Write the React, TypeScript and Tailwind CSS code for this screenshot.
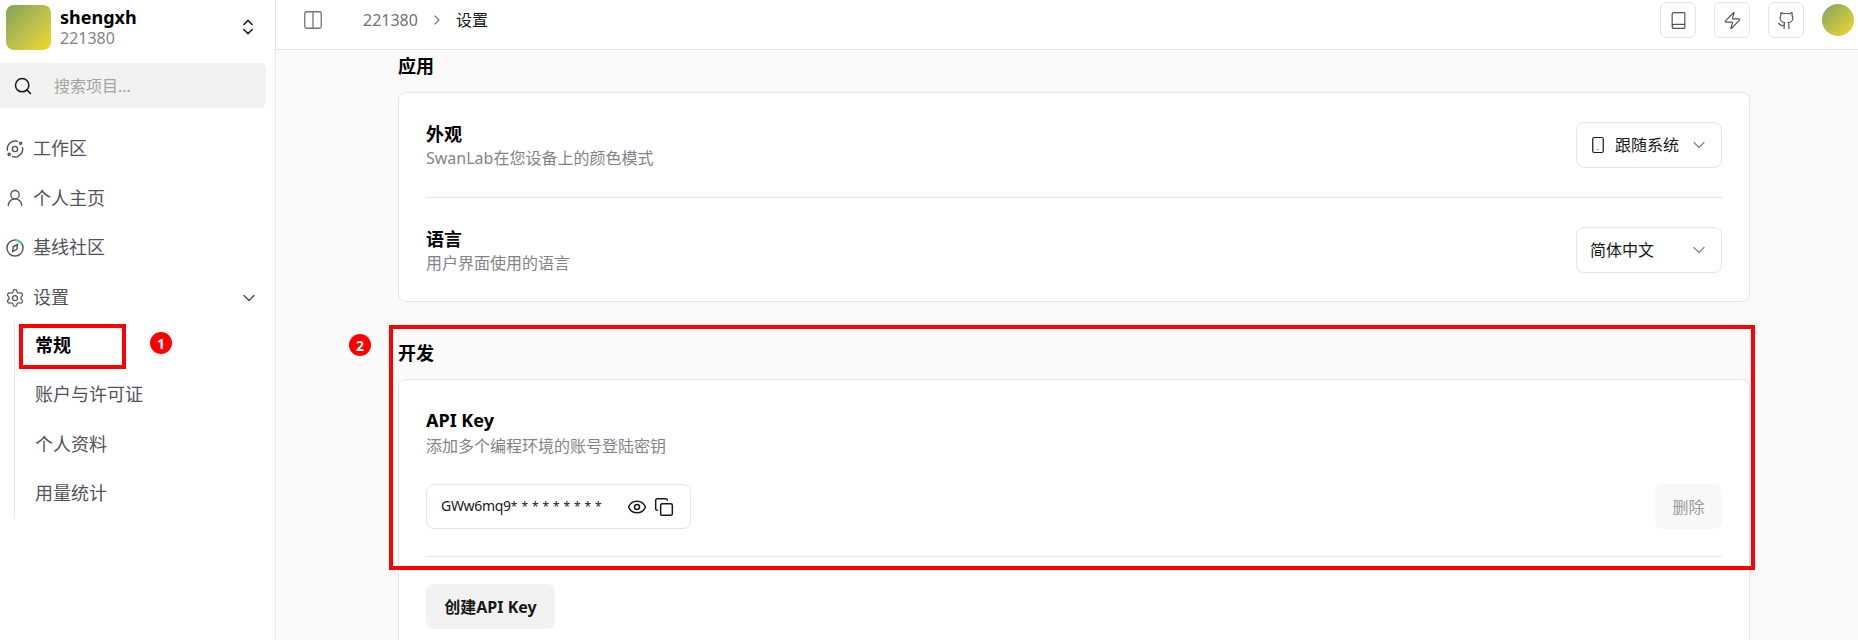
import { Book, ChevronDown, ChevronRight, ChevronsUpDown, Columns2, Copy, Eye, Github, Search, Settings, Smartphone, UserRound, Zap } from "lucide-react";

const font = { fontFamily: '"Noto Sans", "Noto Sans CJK SC", sans-serif' };

const OrbitIcon = () => (
  <svg width="20" height="20" viewBox="0 0 20 20" fill="none" stroke="#52525b" strokeWidth="1.4" strokeLinecap="round">
    <circle cx="10" cy="10" r="2.6" />
    <path d="M12.5 2.4A7.8 7.8 0 0 0 3 6.6a7.8 7.8 0 0 0-.6 4.6" />
    <path d="M7.5 17.6A7.8 7.8 0 0 0 17 13.4a7.8 7.8 0 0 0 .6-4.6" />
    <circle cx="15.6" cy="4.2" r="1.1" />
    <circle cx="4.2" cy="15.4" r="1.1" />
  </svg>
);

const CompassIcon = () => (
  <svg width="20" height="20" viewBox="0 0 20 20" fill="none" strokeWidth="1.4" strokeLinecap="round">
    <circle cx="10" cy="10" r="8" stroke="#52525b" />
    <path d="M10 2A8 8 0 0 1 16.2 5" stroke="#2dd4a7" />
    <path d="M12.4 6.6 11.8 11.4 7.6 13.6 8.2 8.8Z" stroke="#52525b" />
  </svg>
);

const navItems = [
  { label: "工作区", icon: <OrbitIcon /> },
  { label: "个人主页", icon: <UserRound size={20} strokeWidth={1.6} className="text-[#52525b]" /> },
  { label: "基线社区", icon: <CompassIcon /> },
];

const SelectBox = ({ label, withIcon }: { label: string; withIcon?: boolean }) => (
  <div className="flex h-[46px] w-[146px] items-center rounded-lg border border-[#e5e5e5] bg-white pl-[13px] pr-[12px] text-[16px] text-[#18181b]">
    {withIcon && <Smartphone size={18} strokeWidth={1.6} className="mr-[8px] -ml-[1px] shrink-0" />}
    <span className="flex-1">{label}</span>
    <ChevronDown size={20} strokeWidth={1.6} className="text-[#8a8a8a]" />
  </div>
);

const Row = ({ title, desc, children }: { title: string; desc: string; children: React.ReactNode }) => (
  <div className="flex items-center justify-between">
    <div>
      <div className="text-[18px] leading-[26px] font-bold text-black">{title}</div>
      <div className="text-[16px] leading-[22px] text-[#83838a]">{desc}</div>
    </div>
    {children}
  </div>
);

const HeaderButton = ({ children }: { children: React.ReactNode }) => (
  <div className="flex h-[36px] w-[36px] items-center justify-center rounded-md border border-[#e5e5e5] text-[#52525b]">{children}</div>
);

export default function App() {
  return (
    <div style={font} className="relative flex h-[640px] w-[1858px] overflow-hidden bg-white">
      <aside className="w-[276px] shrink-0 border-r border-[#e5e5e5] pr-[9px]">
        <div className="flex h-[63px] items-start pl-[6px] pt-[5px]">
          <div className="h-[45px] w-[45px] rounded-lg bg-gradient-to-br from-[#7ea35c] to-[#f5d91c]" />
          <div className="ml-[9px] flex-1">
            <div className="text-[18px] leading-[24px] font-bold text-black">shengxh</div>
            <div className="text-[16px] leading-[18px] text-[#83838a]">221380</div>
          </div>
          <ChevronsUpDown size={20} strokeWidth={2} className="mr-[8px] mt-[12px] text-[#27272a]" />
        </div>
        <div className="flex h-[45px] items-center rounded-r-md bg-[#f2f2f2] pl-[13px]">
          <Search size={20} strokeWidth={1.8} className="text-[#18181b]" />
          <span className="ml-[21px] text-[16px] text-[#a3a3a3]">搜索项目...</span>
        </div>
        <nav className="mt-[16px]">
          {navItems.map((item) => (
            <div key={item.label} className="flex h-[49.6px] items-center gap-[8px] pl-[5px] text-[18px] text-[#52525b]">
              {item.icon}
              <span>{item.label}</span>
            </div>
          ))}
          <div className="flex h-[49.6px] items-center gap-[8px] pl-[5px] pr-[7px] text-[18px] text-[#52525b]">
            <Settings size={20} strokeWidth={1.5} />
            <span className="flex-1">设置</span>
            <ChevronDown size={20} strokeWidth={1.8} />
          </div>
          <div className="ml-[14px] border-l border-[#e5e5e5] pl-[20px] text-[18px] text-[#52525b]">
            <div className="flex h-[47px] items-center font-bold text-black">常规</div>
            <div className="flex h-[50px] items-center">账户与许可证</div>
            <div className="flex h-[49.5px] items-center">个人资料</div>
            <div className="flex h-[49.5px] items-center">用量统计</div>
          </div>
        </nav>
      </aside>

      <div className="flex min-w-0 flex-1 flex-col bg-[#fafafa]">
        <header className="flex h-[50px] shrink-0 items-start border-b border-[#e5e5e5] bg-white pt-[2px] pl-[26px] pr-[4px]">
          <div className="flex h-[36px] flex-1 items-center">
            <Columns2 size={22} strokeWidth={1.4} className="text-[#71717a]" />
            <span className="ml-[39px] text-[16px] text-[#71717a]">221380</span>
            <ChevronRight size={16} strokeWidth={1.6} className="ml-[11px] text-[#71717a]" />
            <span className="ml-[11px] text-[16px] text-[#18181b]">设置</span>
          </div>
          <div className="flex items-center gap-[18px]">
            <HeaderButton><Book size={19} strokeWidth={1.5} /></HeaderButton>
            <HeaderButton><Zap size={19} strokeWidth={1.5} /></HeaderButton>
            <HeaderButton><Github size={19} strokeWidth={1.5} /></HeaderButton>
            <div className="h-[32px] w-[32px] rounded-full bg-gradient-to-br from-[#7ea35c] to-[#f5d91c]" />
          </div>
        </header>

        <main className="min-h-0 flex-1 overflow-hidden pl-[122px]">
          <div className="w-[1352px]">
            <h2 className="mt-[3px] text-[18px] leading-[26px] font-bold text-black">应用</h2>
            <section className="mt-[13px] rounded-lg border border-[#e5e5e5] bg-white px-[27px] pt-[28px] pb-[27px]">
              <Row title="外观" desc="SwanLab在您设备上的颜色模式">
                <SelectBox label="跟随系统" withIcon />
              </Row>
              <div className="my-[28px] border-t border-[#e5e5e5]" />
              <Row title="语言" desc="用户界面使用的语言">
                <SelectBox label="简体中文" />
              </Row>
            </section>

            <h2 className="mt-[38px] text-[18px] leading-[26px] font-bold text-black">开发</h2>
            <section className="mt-[13px] rounded-t-lg border border-[#e5e5e5] bg-white px-[27px] pb-[40px] pt-[27px]">
              <div className="text-[18px] leading-[26px] font-bold text-black">API Key</div>
              <div className="mt-[2px] text-[16px] leading-[22px] text-[#83838a]">添加多个编程环境的账号登陆密钥</div>
              <div className="mt-[27px] flex items-center justify-between">
                <div className="flex h-[45px] w-[265px] items-center rounded-lg border border-[#e5e5e5] pl-[14px] pr-[16px] text-[14px] text-[#18181b]">
                  <span className="-mt-[2px] flex-1 tracking-[-0.3px]">
                    GWw6mq9<span className="text-[12px] tracking-[0.4px]">* * * * * * * * *</span>
                  </span>
                  <Eye size={20} strokeWidth={1.8} />
                  <Copy size={20} strokeWidth={1.8} className="ml-[7px]" />
                </div>
                <button className="h-[45px] w-[67px] rounded-lg bg-[#f8f8f8] text-[16px] text-[#9a9a9a]">删除</button>
              </div>
              <div className="mt-[27px] border-t border-[#e5e5e5]" />
              <button className="mt-[27px] h-[45px] w-[129px] rounded-lg bg-[#f2f2f2] text-[16px] font-bold text-[#18181b]">创建API Key</button>
            </section>
          </div>
        </main>
      </div>

      {/* 标注 */}
      <div className="absolute left-[19px] top-[324px] h-[45px] w-[107px] border-[4px] border-[#ff0000]" />
      <div className="absolute left-[150px] top-[332px] flex h-[22px] w-[22px] items-center justify-center rounded-full bg-[#ff0000] text-[14px] font-bold text-white">1</div>
      <div className="absolute left-[389px] top-[325px] h-[245px] w-[1366px] border-[4px] border-[#ff0000]" />
      <div className="absolute left-[349px] top-[334px] flex h-[22px] w-[22px] items-center justify-center rounded-full bg-[#ff0000] text-[14px] font-bold text-white">2</div>
    </div>
  );
}
